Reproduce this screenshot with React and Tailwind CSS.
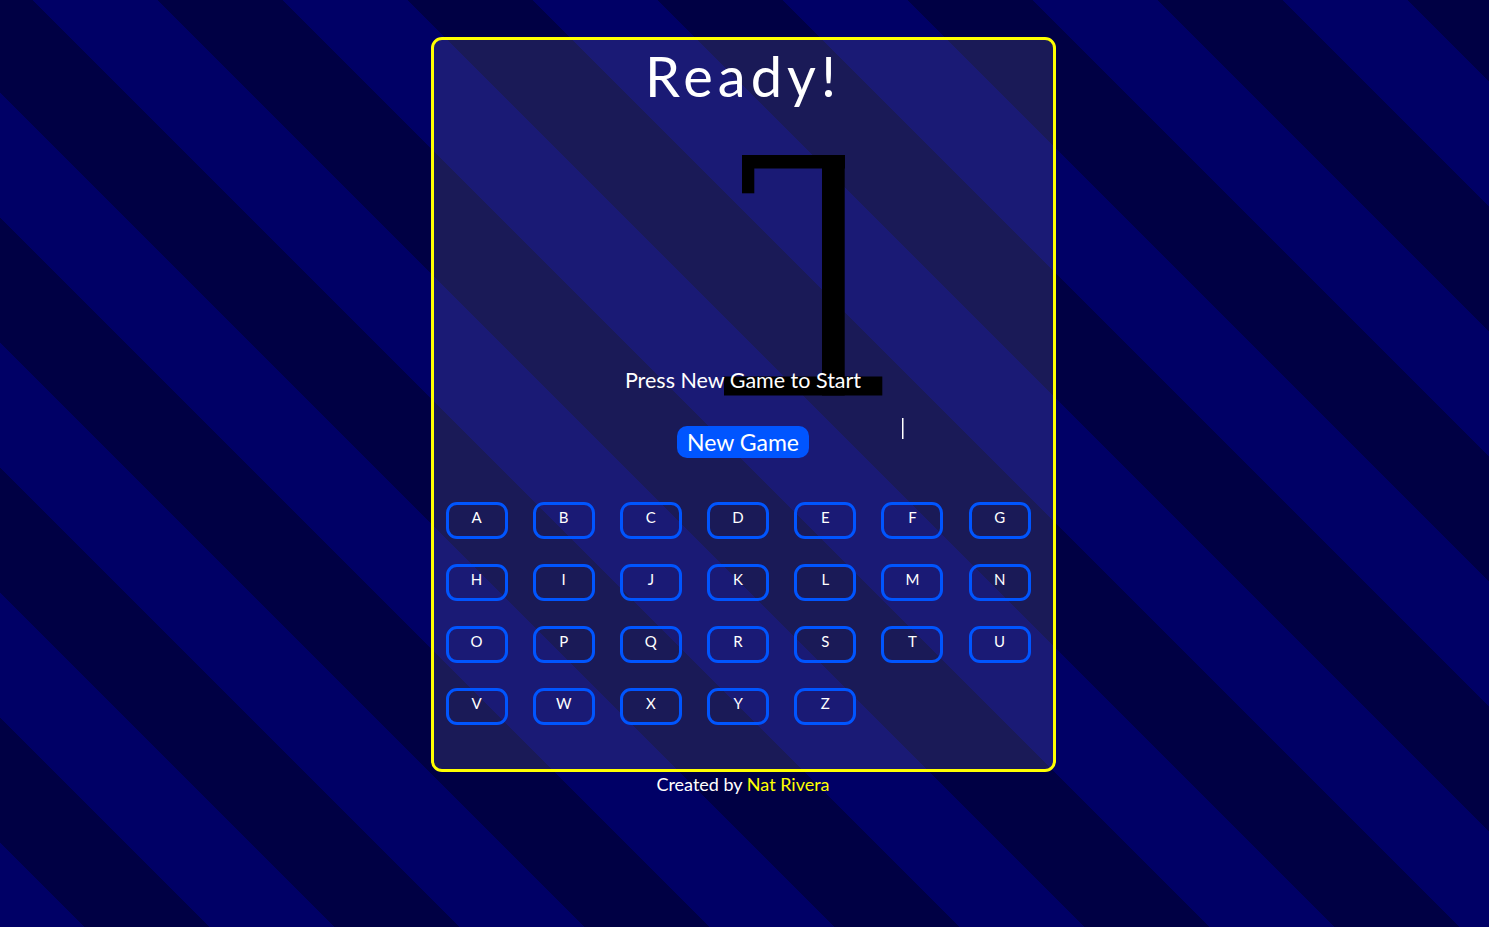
import React from "react";

const letters = "ABCDEFGHIJKLMNOPQRSTUVWXYZ".split("");

export default function App() {
  return (
    <div
      className="min-h-screen w-full bg-[repeating-linear-gradient(45deg,#000066_0_59.8px,#000044_59.8px_148.2px,#000066_148.2px_176.8px)] pt-[37px] pr-[3px] font-['Lato',sans-serif] text-white"
    >
      <div className="mx-auto w-[625px] rounded-[11px] border-[3px] border-[#ffff00] bg-white/10">
        <h1 className="mt-[8px] h-[56px] text-center text-[56px] leading-[56px] font-normal tracking-[5px]">
          Ready!
        </h1>
        <div className="relative pt-[264px]">
          <svg
            className="absolute left-[290px] top-[51px]"
            width="182"
            height="286"
            viewBox="0 0 182 286"
          >
            <rect x="18" y="0" width="103" height="13.5" fill="#000" />
            <rect x="18" y="0" width="12.3" height="38.3" fill="#000" />
            <rect x="98" y="0" width="22.7" height="240.5" fill="#000" />
            <rect x="0" y="221.5" width="158.3" height="19" fill="#000" />
            <rect x="178" y="263" width="1.5" height="21" fill="#fff" />
          </svg>
          <p className="relative z-10 text-center text-[21.5px] leading-[25px]">
            Press New Game to Start
          </p>
        </div>
        <div className="mt-[33px] flex justify-center">
          <button className="h-[32px] w-[132px] rounded-[10px] bg-[#0055ff] text-[23px] leading-[32px] text-white">
            New Game
          </button>
        </div>
        <div className="mt-[44px] mb-[44px] ml-[12px] grid grid-cols-[repeat(7,62px)] gap-x-[25.2px] gap-y-[25px]">
          {letters.map((l) => (
            <button
              key={l}
              className="flex h-[37px] w-[62px] items-start justify-center rounded-[11px] border-[3px] border-[#0055ff] bg-transparent pt-[3px] text-[15px] leading-[18px] text-white"
            >
              {l}
            </button>
          ))}
        </div>
      </div>
      <p className="mt-[2px] text-center text-[18px] leading-[21px]">
        Created by <span className="text-[#ffff00]">Nat Rivera</span>
      </p>
    </div>
  );
}
